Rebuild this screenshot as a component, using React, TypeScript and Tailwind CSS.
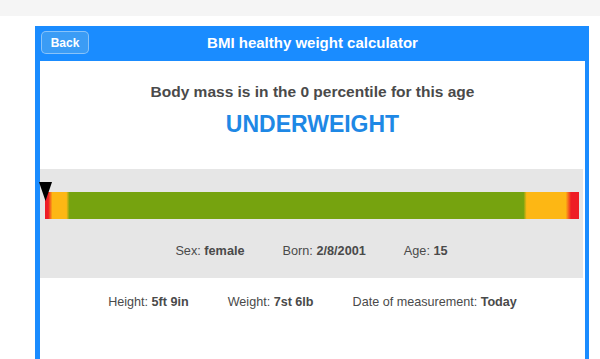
const details = [
  { label: "Sex", value: "female" },
  { label: "Born", value: "2/8/2001" },
  { label: "Age", value: "15" },
];

const measurements = [
  { label: "Height", value: "5ft 9in" },
  { label: "Weight", value: "7st 6lb" },
  { label: "Date of measurement", value: "Today" },
];

const App = () => {
  return (
    <div className="min-h-[359px] bg-white font-['Liberation_Sans',Arial,sans-serif] text-[#4a4a4a]">
      <div className="h-[16px] bg-[#f5f5f5]" />
      <div className="pt-[10px] pl-[35px] pr-[11px]">
        <div className="border-l-[5px] border-r-[4px] border-[#1a8cff] bg-white">
          {/* header */}
          <div className="relative flex h-[35px] items-center justify-center bg-[#1a8cff]">
            <button className="absolute left-[1px] top-[5px] h-[23px] w-[48px] rounded-[5px] border border-white/40 bg-[#3b9cf5] text-[12px] font-bold text-white">
              Back
            </button>
            <h1 className="text-[15px] font-bold text-white">BMI healthy weight calculator</h1>
          </div>

          <div className="flex h-[108px] flex-col items-center pt-[22px]">
            <p className="text-[15.5px] font-bold leading-[18px]">
              Body mass is in the 0 percentile for this age
            </p>
            <p className="mt-[10px] text-[23px] font-bold leading-[27px] text-[#1e88e5]">UNDERWEIGHT</p>
          </div>

          <div className="mr-[2px] h-[109px] bg-[#e6e6e6] pt-[23px]">
            <div className="relative ml-[5px] mr-[4px]">
              <div className="h-[27px] bg-[linear-gradient(to_right,#ee1c25_0%,#ee1c25_0.6%,#fdb714_1.4%,#fdb714_4%,#76a30f_4.6%,#76a30f_89.6%,#fdb714_90.2%,#fdb714_97.5%,#ee1c25_98.5%,#ee1c25_100%)]" />
              <svg
                className="absolute left-[-6px] top-[-10px]"
                width="13"
                height="19"
                viewBox="0 0 13 19"
              >
                <polygon points="0,0 13,0 6.5,19" fill="#000" />
              </svg>
            </div>
            <div className="mt-[25px] flex justify-center gap-[38px] text-[12.7px] leading-[14px]">
              {details.map((d) => (
                <span key={d.label}>
                  {d.label}: <b>{d.value}</b>
                </span>
              ))}
            </div>
          </div>

          <div className="flex h-[81px] justify-center gap-[39px] pt-[17px] text-[12.6px] leading-[14px]">
            {measurements.map((m) => (
              <span key={m.label}>
                {m.label}: <b>{m.value}</b>
              </span>
            ))}
          </div>
        </div>
      </div>
    </div>
  );
};

export default App;
